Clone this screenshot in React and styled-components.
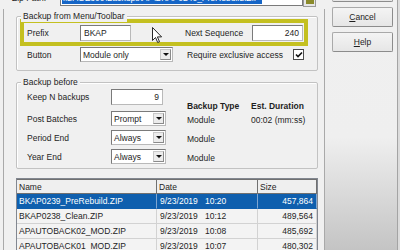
import React from 'react';
import styled, { createGlobalStyle } from 'styled-components';

const GlobalStyle = createGlobalStyle`
  html, body {
    margin: 0;
    padding: 0;
    background: #f0f0f0;
  }
  body {
    font-family: 'Liberation Sans', Arial, sans-serif;
    font-size: 8.5px;
    color: #1e1e1e;
  }
`;

const Window = styled.div`
  position: relative;
  width: 400px;
  height: 250px;
  overflow: hidden;
  display: flex;
  background: #dcdcdc;
`;

const LeftPane = styled.div`
  width: 325px;
  flex: none;
  display: flex;
  flex-direction: column;
  background: #f0f0f0;
`;

const PathRow = styled.div`
  display: flex;
  align-items: center;
  height: 18px;
  margin-top: -11px;
  padding-left: 12px;
`;

const PathLabel = styled.div`
  width: 48px;
  line-height: 10px;
`;

const PathField = styled.div`
  width: 243px;
  height: 17px;
  align-self: flex-start;
  box-sizing: border-box;
  border: 1px solid #7a7a7a;
  background: #fff;
  padding: 0 1px;
  display: flex;
  align-items: center;
  overflow: hidden;
  white-space: nowrap;
`;

const Selected = styled.span`
  background: #1565c6;
  color: #fff;
  line-height: 12px;
  padding-right: 2px;
`;

const BrowseButton = styled.div`
  width: 13px;
  height: 18px;
  box-sizing: border-box;
  border: 1px solid #9a9a9a;
  background: #e6e6e6;
  display: flex;
  align-items: flex-end;
  justify-content: center;
  padding-bottom: 2px;
`;

const Frame = styled.div`
  flex: 1;
  margin: 2px 0 0 3px;
  width: 322px;
  box-sizing: border-box;
  border-left: 1px solid #a9a9a9;
  border-right: 1px solid #a9a9a9;
  padding: 0 6px 0 12px;
`;

const Group = styled.div`
  position: relative;
  width: 302px;
  height: ${(p) => p.$height}px;
  margin-top: ${(p) => p.$top}px;
  box-sizing: border-box;
  border: 1px solid #c2c2c2;
  border-radius: 2px;
  box-shadow: inset 1px 1px 0 #fff;
`;

const Legend = styled.div`
  position: absolute;
  top: -6px;
  left: 4px;
  padding: 0 2px;
  line-height: 11px;
  background: #f0f0f0;
`;

const Highlight = styled.div`
  margin: 2px 0 0 3px;
  width: 288px;
  height: 27px;
  box-sizing: border-box;
  border: 4px solid #c4c020;
  padding-left: 3px;
  display: grid;
  grid-template-columns: 53px 51px 121px 51px;
  align-items: center;
`;

const Label = styled.div`
  padding-left: ${(p) => p.$indent || 0}px;
  white-space: nowrap;
`;

const TextBox = styled.div`
  width: ${(p) => p.$width}px;
  height: 16px;
  box-sizing: border-box;
  border: 1px solid #7a7a7a;
  border-right-color: #b9b9b9;
  border-bottom-color: #b9b9b9;
  background: #fff;
  padding: 0 3px;
  display: flex;
  align-items: center;
  justify-content: ${(p) => (p.$right ? 'flex-end' : 'flex-start')};
`;

const OptionRow = styled.div`
  display: flex;
  align-items: center;
  margin-top: 1px;
  padding-left: 10px;
`;

const Select = styled.div`
  width: ${(p) => p.$width}px;
  height: 15px;
  box-sizing: border-box;
  border: 1px solid #7a7a7a;
  border-right-color: #b9b9b9;
  border-bottom-color: #b9b9b9;
  background: #fff;
  display: flex;
  align-items: center;
  padding: 1px 1px 1px 2px;
`;

const SelectText = styled.span`
  flex: 1;
  white-space: nowrap;
`;

const DropButton = styled.div`
  width: 11px;
  height: 100%;
  box-sizing: border-box;
  border: 1px solid #c8c8c8;
  border-right-color: #8a8a8a;
  border-bottom-color: #8a8a8a;
  background: #ececec;
  display: flex;
  align-items: center;
  justify-content: center;

  &::after {
    content: '';
    border-left: 3px solid transparent;
    border-right: 3px solid transparent;
    border-top: 3px solid #111;
  }
`;

const CheckText = styled.div`
  width: 106px;
  margin-left: 14px;
  white-space: nowrap;
`;

const CheckBox = styled.div`
  width: 11px;
  height: 11px;
  box-sizing: border-box;
  border: 1px solid #4a4a4a;
  background: #fff;
  display: flex;
  align-items: center;
  justify-content: center;
`;

const Columns = styled.div`
  display: flex;
`;

const SettingsColumn = styled.div`
  width: 170px;
  box-sizing: border-box;
  padding: 6px 0 0 10px;
  display: flex;
  flex-direction: column;
`;

const SettingRow = styled.div`
  display: grid;
  grid-template-columns: 84px auto;
  align-items: center;
  margin-top: ${(p) => p.$gap || 0}px;
`;

const TypeColumn = styled.div`
  padding-top: 17px;
  display: flex;
  flex-direction: column;
`;

const TypeRow = styled.div`
  display: grid;
  grid-template-columns: 64px auto;
  align-items: center;
  height: ${(p) => (p.$head ? 12 : 15)}px;
  font-weight: ${(p) => (p.$head ? 700 : 400)};
  margin-top: ${(p) => p.$gap || 0}px;
  white-space: nowrap;
`;

const Table = styled.div`
  width: 302px;
  margin-top: 9px;
  box-sizing: border-box;
  border: 1px solid #828790;
  border-bottom: none;
  background: #f3f3f3;
`;

const HeaderRow = styled.div`
  display: grid;
  grid-template-columns: 140px 101px 1fr;
  height: 15px;
  background: #efefef;
`;

const HeaderCell = styled.div`
  box-sizing: border-box;
  border: 1px solid #707070;
  border-left: none;
  display: flex;
  align-items: center;
  padding-left: 2px;
`;

const FileRow = styled.div`
  display: grid;
  grid-template-columns: 140px 101px 1fr;
  height: 15px;
  background: ${(p) => (p.$active ? '#0f5fae' : '#f3f3f3')};
  color: ${(p) => (p.$active ? '#fff' : '#1e1e1e')};
`;

const Cell = styled.div`
  box-sizing: border-box;
  border-right: 1px solid ${(p) => (p.$active ? '#7ea6d2' : '#d2d2d2')};
  border-bottom: 1px solid ${(p) => (p.$active ? '#0f5fae' : '#d2d2d2')};
  display: flex;
  align-items: center;
  justify-content: ${(p) => (p.$right ? 'flex-end' : 'flex-start')};
  padding: 0 3px 0 2px;
  white-space: nowrap;
`;

const DatePart = styled.span`
  display: inline-block;
  width: 45px;
  padding-left: 1px;
`;

const RightPane = styled.div`
  width: 72px;
  flex: none;
  border-right: 1px solid #a4a4a4;
  background: linear-gradient(to bottom, #f0f0f0 0%, #efefef 55%, #c4c4c4 100%);
`;

const ButtonColumn = styled.div`
  margin-top: -18px;
  padding-left: 7px;
  display: flex;
  flex-direction: column;
  gap: 5px;
`;

const DialogButton = styled.div`
  width: 61px;
  height: 20px;
  box-sizing: border-box;
  border: 1px solid #a9a9a9;
  border-right-color: #8c8c8c;
  border-bottom-color: #8c8c8c;
  border-radius: 2px;
  background: linear-gradient(to bottom, #f4f4f4, #e6e6e6);
  display: flex;
  align-items: center;
  justify-content: center;
`;

const Pointer = styled.svg`
  position: absolute;
  left: 152px;
  top: 27px;
`;

const files = [
  { name: 'BKAP0239_PreRebuild.ZIP', date: '9/23/2019', time: '10:20', size: '457,864' },
  { name: 'BKAP0238_Clean.ZIP', date: '9/23/2019', time: '10:12', size: '489,564' },
  { name: 'APAUTOBACK02_MOD.ZIP', date: '9/23/2019', time: '10:08', size: '485,692' },
  { name: 'APAUTOBACK01_MOD.ZIP', date: '9/23/2019', time: '10:07', size: '480,302' },
];

const Dropdown = ({ width, value }) => (
  <Select $width={width}>
    <SelectText>{value}</SelectText>
    <DropButton />
  </Select>
);

export default function App() {
  return (
    <>
      <GlobalStyle />
      <Window>
        <LeftPane>
          <PathRow>
            <PathLabel>Zip Path:</PathLabel>
            <PathField>
              <Selected>\\SAGE300\Backups\AP\BKAP0240_PreRebuild.ZIP</Selected>
            </PathField>
            <BrowseButton>
              <svg width="8" height="6" viewBox="0 0 8 6">
                <path d="M0 1h3l1 1h4v4H0z" fill="#8a8a2a" />
              </svg>
            </BrowseButton>
          </PathRow>

          <Frame>
            <Group $top={7} $height={55}>
              <Legend>Backup from Menu/Toolbar</Legend>
              <Highlight>
                <Label>Prefix</Label>
                <TextBox $width={51}>BKAP</TextBox>
                <Label $indent={54}>Next Sequence</Label>
                <TextBox $width={51} $right>240</TextBox>
              </Highlight>
              <OptionRow>
                <Label style={{ width: 53 }}>Button</Label>
                <Dropdown width={93} value="Module only" />
                <CheckText>Require exclusive access</CheckText>
                <CheckBox>
                  <svg width="8" height="8" viewBox="0 0 8 8">
                    <path d="M1 3.5l2 2L7 1.5" fill="none" stroke="#111" strokeWidth="1.6" />
                  </svg>
                </CheckBox>
              </OptionRow>
            </Group>

            <Group $top={11} $height={87}>
              <Legend>Backup before</Legend>
              <Columns>
                <SettingsColumn>
                  <SettingRow>
                    <Label>Keep N backups</Label>
                    <TextBox $width={52} $right>9</TextBox>
                  </SettingRow>
                  <SettingRow $gap={6}>
                    <Label>Post Batches</Label>
                    <Dropdown width={55} value="Prompt" />
                  </SettingRow>
                  <SettingRow $gap={4}>
                    <Label>Period End</Label>
                    <Dropdown width={55} value="Always" />
                  </SettingRow>
                  <SettingRow $gap={4}>
                    <Label>Year End</Label>
                    <Dropdown width={55} value="Always" />
                  </SettingRow>
                </SettingsColumn>
                <TypeColumn>
                  <TypeRow $head>
                    <span>Backup Type</span>
                    <span>Est. Duration</span>
                  </TypeRow>
                  <TypeRow>
                    <span>Module</span>
                    <span>00:02 (mm:ss)</span>
                  </TypeRow>
                  <TypeRow $gap={4}>
                    <span>Module</span>
                  </TypeRow>
                  <TypeRow $gap={4}>
                    <span>Module</span>
                  </TypeRow>
                </TypeColumn>
              </Columns>
            </Group>

            <Table>
              <HeaderRow>
                <HeaderCell>Name</HeaderCell>
                <HeaderCell>Date</HeaderCell>
                <HeaderCell>Size</HeaderCell>
              </HeaderRow>
              {files.map((f, i) => (
                <FileRow key={f.name} $active={i === 0}>
                  <Cell $active={i === 0}>{f.name}</Cell>
                  <Cell $active={i === 0}>
                    <DatePart>{f.date}</DatePart>
                    {f.time}
                  </Cell>
                  <Cell $active={i === 0} $right>{f.size}</Cell>
                </FileRow>
              ))}
            </Table>
          </Frame>
        </LeftPane>

        <RightPane>
          <ButtonColumn>
            <DialogButton>OK</DialogButton>
            <DialogButton><u>C</u>ancel</DialogButton>
            <DialogButton><u>H</u>elp</DialogButton>
          </ButtonColumn>
        </RightPane>

        <Pointer width="11" height="17" viewBox="0 0 11 17">
          <path
            d="M0.5 0.5v13l3-3 2.2 5 1.8-0.8-2.1-4.8h4.2z"
            fill="#fff"
            stroke="#111"
            strokeWidth="0.9"
            strokeLinejoin="round"
          />
        </Pointer>
      </Window>
    </>
  );
}
